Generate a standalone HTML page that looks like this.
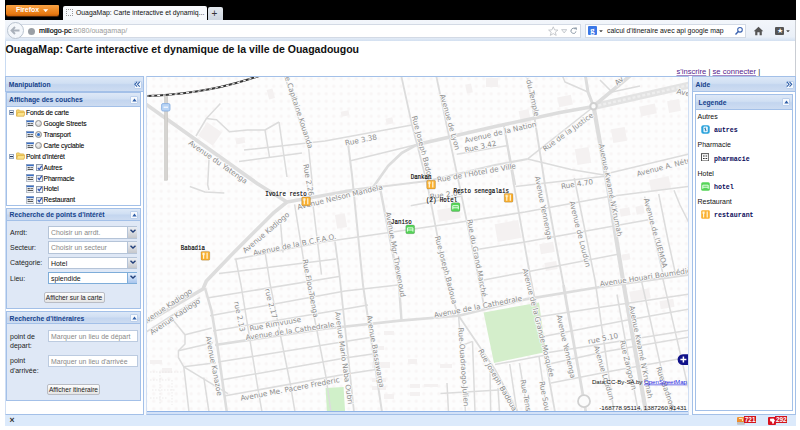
<!DOCTYPE html>
<html><head><meta charset="utf-8"><title>OuagaMap</title>
<style>
html,body{margin:0;padding:0;background:#fff;}
body{width:800px;height:430px;position:relative;overflow:hidden;font-family:"Liberation Sans",sans-serif;}
.a{position:absolute;}
.t{position:absolute;white-space:nowrap;line-height:1;}
.ph{position:absolute;background:linear-gradient(#dde8f7,#d0dff3 45%,#c3d5ef 55%,#cddcf1);border:1px solid #a3c0e8;box-sizing:border-box;}
.pt{position:absolute;white-space:nowrap;line-height:1;font-weight:bold;color:#15428b;font-size:6.78px;}
.tool{position:absolute;box-sizing:border-box;border:1px solid #bcd0ec;background:#f6f9fd;border-radius:1px;}
.tr{position:absolute;white-space:nowrap;line-height:1;font-size:6.7px;letter-spacing:-0.13px;color:#000;-webkit-text-stroke:0.1px #222;}
.fld{position:absolute;box-sizing:border-box;border:1px solid #bccbe0;background:#fff;}
.trig{position:absolute;box-sizing:border-box;border:1px solid #b5c4d8;border-left:none;border-right:none;background:linear-gradient(#eceff4,#c6c8cc);}
.lbl{position:absolute;white-space:nowrap;line-height:1;font-size:7px;color:#222;}
.ftx{position:absolute;white-space:nowrap;line-height:1;font-size:6.95px;}
.btn{position:absolute;box-sizing:border-box;border:1px solid #b9bcc4;border-radius:2px;background:linear-gradient(#fdfdfd,#e4e4e4);font-size:6.55px;color:#222;text-align:center;white-space:nowrap;}
</style></head><body>
<!-- browser chrome -->
<div class="a" id="blk" style="left:5px;top:0;width:791px;height:20px;background:#000"></div>
<div class="a" id="ffb" style="left:5.5px;top:5px;width:53.5px;height:10.6px;background:linear-gradient(#f8a244,#e97a12 80%,#c9620c);border-radius:1px 1px 2px 2px;box-shadow:0 1px 0 #4a2408;"></div>
<div class="t" style="left:16px;top:7px;font-size:6.9px;font-weight:bold;color:#fff;">Firefox</div>
<svg class="a" style="left:43.4px;top:8.6px" width="5.4" height="3.4" viewBox="0 0 5.4 3.4"><path d="M0.2 0.3 H5.2 L2.7 3.2 Z" fill="#fff"/></svg>
<div class="a" id="tab" style="left:63px;top:6px;width:144px;height:14px;background:#f7f9fc;border-radius:2px 2px 0 0;"></div>
<div class="a" style="left:66px;top:9px;width:7px;height:7px;box-sizing:border-box;border:1px dotted #999;"></div>
<div class="t" style="left:76px;top:9.6px;font-size:6.83px;color:#111;">OuagaMap: Carte interactive et dynamiq...</div>
<div class="a" id="ntb" style="left:208px;top:7px;width:15px;height:13px;background:linear-gradient(#e3e8ee,#cdd5df);border-radius:2px 2px 0 0;"></div>
<div class="t" style="left:211.5px;top:8.5px;font-size:10px;color:#333;">+</div>
<div class="a" id="nav" style="left:5px;top:20px;width:791px;height:21px;background:linear-gradient(#f3f6fb,#eaf0f8 80%,#d3e0f1);"></div>
<div class="a" id="url" style="left:14px;top:24px;width:567px;height:14px;box-sizing:border-box;border:1px solid #d3dae5;background:#fff;"></div>
<div class="a" id="back" style="left:7px;top:22px;width:17px;height:17px;box-sizing:border-box;border:1px solid #b9c3d0;border-radius:50%;background:#f4f7fb;"></div>
<svg class="a" style="left:10px;top:26px" width="11" height="9" viewBox="0 0 11 9"><path d="M5 1 L1.5 4.5 L5 8 M1.5 4.5 H9.5" fill="none" stroke="#aab1bb" stroke-width="1.8"/></svg>
<div class="a" style="left:28px;top:28px;width:7px;height:7px;border-radius:50%;background:#9a9fa5;"></div>
<div class="t" style="left:39px;top:27.6px;font-size:7.15px;color:#000;-webkit-text-stroke:0.15px #000;">millogo-pc<span style="color:#999;-webkit-text-stroke:0">:8080/ouagamap/</span></div>
<svg class="a" style="left:547.5px;top:25.5px" width="10.5" height="10" viewBox="0 0 10.5 10"><path d="M5.25 0.8 L6.6 3.9 L9.9 4.1 L7.3 6.2 L8.2 9.4 L5.25 7.6 L2.3 9.4 L3.2 6.2 L0.6 4.1 L3.9 3.9 Z" fill="#fff" stroke="#b9bdc2" stroke-width="0.8" stroke-linejoin="round"/></svg>
<svg class="a" style="left:561px;top:29px" width="6.4" height="4.6" viewBox="0 0 6.4 4.6"><path d="M0.6 0.6 H5.8 L3.2 4 Z" fill="#f4f6f8" stroke="#b4b9bf" stroke-width="0.7" stroke-linejoin="round"/></svg>
<svg class="a" style="left:570.4px;top:27.4px" width="7.4" height="7.4" viewBox="0 0 7.4 7.4"><path d="M5.9 4.4 A2.5 2.5 0 1 1 5.2 2" fill="none" stroke="#8795a3" stroke-width="1"/><path d="M4 0.4 H6.8 V3.2 Z" fill="#8795a3"/></svg>
<div class="a" id="srch" style="left:585px;top:24px;width:161px;height:14px;box-sizing:border-box;border:1px solid #d3dae5;background:#fff;"></div>
<div class="a" style="left:588px;top:26px;width:9px;height:9px;background:#3b78e7;border-radius:1px;"></div>
<div class="t" style="left:590.2px;top:25.6px;font-size:8.6px;font-weight:bold;color:#fff;font-family:'Liberation Serif',serif;">g</div>
<svg class="a" style="left:598.6px;top:29.6px" width="4" height="2.6" viewBox="0 0 4 2.6"><path d="M0.2 0.3 H3.8 L2 2.4 Z" fill="#444"/></svg>
<div class="t" style="left:607px;top:27.7px;font-size:6.9px;color:#111;">calcul d'itineraire avec api google map</div>
<svg class="a" style="left:734px;top:26px" width="10" height="10" viewBox="0 0 10 10"><circle cx="6" cy="3.8" r="2.3" fill="none" stroke="#3a62b0" stroke-width="1.1"/><path d="M4.3 5.6 L1.5 8.5" stroke="#3a62b0" stroke-width="1.4"/></svg>
<svg class="a" style="left:753px;top:26px" width="11" height="10" viewBox="0 0 11 10"><path d="M5.5 0.8 L10.3 5.2 H8.8 V9.2 H6.6 V6.3 H4.4 V9.2 H2.2 V5.2 H0.7 Z" fill="#555"/></svg>
<div class="a" style="left:775px;top:27px;width:9px;height:8px;background:#555;border-radius:1px;"></div>
<div class="t" style="left:776.5px;top:27px;font-size:7px;color:#fff;">★</div>
<svg class="a" style="left:785.6px;top:29.8px" width="4" height="2.6" viewBox="0 0 4 2.6"><path d="M0.2 0.3 H3.8 L2 2.4 Z" fill="#444"/></svg>
<div class="a" style="left:795px;top:20px;width:1px;height:406px;background:#c9cdd3;"></div>

<div class="a" id="lb" style="left:5px;top:41px;width:1px;height:385px;background:#c9dbf2;"></div>
<!-- page header -->
<div class="t" id="title" style="left:5.6px;top:44px;font-size:10.54px;font-weight:bold;color:#111;">OuagaMap: Carte interactive et dynamique de la ville de Ouagadougou</div>
<div class="t" id="links" style="left:676.5px;top:67.8px;font-size:7.62px;color:#222;"><span style="color:#551a8b;text-decoration:underline;text-decoration-color:#a98cc6;text-decoration-thickness:0.7px">s'inscrire</span> | <span style="color:#551a8b;text-decoration:underline;text-decoration-color:#a98cc6;text-decoration-thickness:0.7px">se connecter</span> |</div>

<!-- viewport bg -->
<div class="a" id="vp" style="left:5px;top:76px;width:791px;height:339px;background:#f7fafe;"></div>

<!-- LEFT PANEL -->
<div class="a" style="left:5px;top:76px;width:139px;height:339px;box-sizing:border-box;border:1px solid #a3c0e8;border-left-color:#cfdef3;background:#fff;"></div>
<div class="ph" style="left:5px;top:76px;width:139px;height:16px;"></div>
<div class="pt" style="left:8.8px;top:81.8px;">Manipulation</div>
<div class="tool" style="left:133.5px;top:80.5px;width:8px;height:8px;"></div>
<svg class="a" style="left:134.2px;top:81.2px" width="6.6" height="6.6" viewBox="0 0 6 6"><path d="M2.8 0.9 L0.8 3 L2.8 5.1 M5.2 0.9 L3.2 3 L5.2 5.1" fill="none" stroke="#2f5fa8" stroke-width="1"/></svg>

<!-- panel 1 -->
<div class="a" style="left:6px;top:92px;width:135px;height:114px;box-sizing:border-box;border:1px solid #a3c0e8;background:#fff;"></div>
<div class="ph" style="left:6px;top:92px;width:135px;height:15px;"></div>
<div class="pt" style="left:9px;top:97.2px;">Affichage des couches</div>
<div class="tool" style="left:130px;top:96px;width:8px;height:8px;"></div>
<svg class="a" style="left:131.5px;top:98.2px" width="5" height="4" viewBox="0 0 5 4"><path d="M0.3 3.4 L2.5 0.6 L4.7 3.4 Z" fill="#2f5ea8"/></svg>
<div id="tree">
<div class="a" style="left:9px;top:110.0px;width:5.4px;height:5.4px;box-sizing:border-box;border:1px solid #93a6c2;background:linear-gradient(#fff,#c9d6ea);"></div>
<div class="a" style="left:10.4px;top:112.3px;width:2.6px;height:0.9px;background:#2b3a55;"></div>
<svg class="a" style="left:15.8px;top:108.6px" width="9.4" height="8" viewBox="0 0 9.4 8"><path d="M0.5 6.9 V1.5 Q0.5 0.9 1.1 0.9 H3.3 L4.1 1.9 H7.4 Q8 1.9 8 2.5 V3.2" fill="#f6d873" stroke="#d8a838" stroke-width="0.7"/><path d="M0.6 7.2 L1.6 3.4 H9 L8 7.2 Z" fill="#fbe38c" stroke="#d8a838" stroke-width="0.7" stroke-linejoin="round"/></svg>
<div class="tr" style="left:26px;top:110.1px;">Fonds de carte</div>
<svg class="a" style="left:25.6px;top:119.9px" width="8.4" height="7.6" viewBox="0 0 8.4 7.6"><rect x="0.3" y="0.3" width="7.8" height="7" fill="#eef1f5" stroke="#8b97a8" stroke-width="0.6"/><rect x="0.6" y="0.6" width="7.2" height="1.5" fill="#3b6fc4"/><rect x="1.6" y="3.2" width="2.2" height="1" fill="#333"/><rect x="4.4" y="3.2" width="2.6" height="0.9" fill="#555"/><rect x="1.6" y="5" width="5.4" height="0.9" fill="#444"/></svg>
<div class="a" style="left:35.2px;top:120.2px;width:7px;height:7px;box-sizing:border-box;border:1px solid #8e8e8e;border-radius:50%;background:radial-gradient(circle at 40% 35%,#f6f6f6,#c2c2c2);"></div>
<div class="tr" style="left:43.6px;top:121.0px;">Google Streets</div>
<svg class="a" style="left:25.6px;top:130.8px" width="8.4" height="7.6" viewBox="0 0 8.4 7.6"><rect x="0.3" y="0.3" width="7.8" height="7" fill="#eef1f5" stroke="#8b97a8" stroke-width="0.6"/><rect x="0.6" y="0.6" width="7.2" height="1.5" fill="#3b6fc4"/><rect x="1.6" y="3.2" width="2.2" height="1" fill="#333"/><rect x="4.4" y="3.2" width="2.6" height="0.9" fill="#555"/><rect x="1.6" y="5" width="5.4" height="0.9" fill="#444"/></svg>
<div class="a" style="left:35.2px;top:131.1px;width:7px;height:7px;box-sizing:border-box;border:1px solid #8e8e8e;border-radius:50%;background:radial-gradient(circle at 40% 35%,#f6f6f6,#c2c2c2);"></div>
<div class="a" style="left:37.2px;top:133.1px;width:3px;height:3px;border-radius:50%;background:#2b6cc8;"></div>
<div class="tr" style="left:43.6px;top:131.9px;">Transport</div>
<svg class="a" style="left:25.6px;top:141.7px" width="8.4" height="7.6" viewBox="0 0 8.4 7.6"><rect x="0.3" y="0.3" width="7.8" height="7" fill="#eef1f5" stroke="#8b97a8" stroke-width="0.6"/><rect x="0.6" y="0.6" width="7.2" height="1.5" fill="#3b6fc4"/><rect x="1.6" y="3.2" width="2.2" height="1" fill="#333"/><rect x="4.4" y="3.2" width="2.6" height="0.9" fill="#555"/><rect x="1.6" y="5" width="5.4" height="0.9" fill="#444"/></svg>
<div class="a" style="left:35.2px;top:142.0px;width:7px;height:7px;box-sizing:border-box;border:1px solid #8e8e8e;border-radius:50%;background:radial-gradient(circle at 40% 35%,#f6f6f6,#c2c2c2);"></div>
<div class="tr" style="left:43.6px;top:142.8px;">Carte cyclable</div>
<div class="a" style="left:9px;top:153.6px;width:5.4px;height:5.4px;box-sizing:border-box;border:1px solid #93a6c2;background:linear-gradient(#fff,#c9d6ea);"></div>
<div class="a" style="left:10.4px;top:155.9px;width:2.6px;height:0.9px;background:#2b3a55;"></div>
<svg class="a" style="left:15.8px;top:152.2px" width="9.4" height="8" viewBox="0 0 9.4 8"><path d="M0.5 6.9 V1.5 Q0.5 0.9 1.1 0.9 H3.3 L4.1 1.9 H7.4 Q8 1.9 8 2.5 V3.2" fill="#f6d873" stroke="#d8a838" stroke-width="0.7"/><path d="M0.6 7.2 L1.6 3.4 H9 L8 7.2 Z" fill="#fbe38c" stroke="#d8a838" stroke-width="0.7" stroke-linejoin="round"/></svg>
<div class="tr" style="left:26px;top:153.7px;">Point d'intérêt</div>
<svg class="a" style="left:25.6px;top:163.5px" width="8.4" height="7.6" viewBox="0 0 8.4 7.6"><rect x="0.3" y="0.3" width="7.8" height="7" fill="#eef1f5" stroke="#8b97a8" stroke-width="0.6"/><rect x="0.6" y="0.6" width="7.2" height="1.5" fill="#3b6fc4"/><rect x="1.6" y="3.2" width="2.2" height="1" fill="#333"/><rect x="4.4" y="3.2" width="2.6" height="0.9" fill="#555"/><rect x="1.6" y="5" width="5.4" height="0.9" fill="#444"/></svg>
<div class="a" style="left:35.6px;top:163.8px;width:7.2px;height:7px;box-sizing:border-box;border:1px solid #8e9aab;background:linear-gradient(135deg,#dfe6ee,#fbfcfd);"></div>
<svg class="a" style="left:36.5px;top:164.5px" width="5.6" height="5.6" viewBox="0 0 5 5"><path d="M0.8 2.5 L2 4.1 L4.3 0.7" fill="none" stroke="#3558b8" stroke-width="1.15"/></svg>
<div class="tr" style="left:43.6px;top:164.6px;">Autres</div>
<svg class="a" style="left:25.6px;top:174.4px" width="8.4" height="7.6" viewBox="0 0 8.4 7.6"><rect x="0.3" y="0.3" width="7.8" height="7" fill="#eef1f5" stroke="#8b97a8" stroke-width="0.6"/><rect x="0.6" y="0.6" width="7.2" height="1.5" fill="#3b6fc4"/><rect x="1.6" y="3.2" width="2.2" height="1" fill="#333"/><rect x="4.4" y="3.2" width="2.6" height="0.9" fill="#555"/><rect x="1.6" y="5" width="5.4" height="0.9" fill="#444"/></svg>
<div class="a" style="left:35.6px;top:174.7px;width:7.2px;height:7px;box-sizing:border-box;border:1px solid #8e9aab;background:linear-gradient(135deg,#dfe6ee,#fbfcfd);"></div>
<svg class="a" style="left:36.5px;top:175.4px" width="5.6" height="5.6" viewBox="0 0 5 5"><path d="M0.8 2.5 L2 4.1 L4.3 0.7" fill="none" stroke="#3558b8" stroke-width="1.15"/></svg>
<div class="tr" style="left:43.6px;top:175.5px;">Pharmacie</div>
<svg class="a" style="left:25.6px;top:185.3px" width="8.4" height="7.6" viewBox="0 0 8.4 7.6"><rect x="0.3" y="0.3" width="7.8" height="7" fill="#eef1f5" stroke="#8b97a8" stroke-width="0.6"/><rect x="0.6" y="0.6" width="7.2" height="1.5" fill="#3b6fc4"/><rect x="1.6" y="3.2" width="2.2" height="1" fill="#333"/><rect x="4.4" y="3.2" width="2.6" height="0.9" fill="#555"/><rect x="1.6" y="5" width="5.4" height="0.9" fill="#444"/></svg>
<div class="a" style="left:35.6px;top:185.6px;width:7.2px;height:7px;box-sizing:border-box;border:1px solid #8e9aab;background:linear-gradient(135deg,#dfe6ee,#fbfcfd);"></div>
<svg class="a" style="left:36.5px;top:186.3px" width="5.6" height="5.6" viewBox="0 0 5 5"><path d="M0.8 2.5 L2 4.1 L4.3 0.7" fill="none" stroke="#3558b8" stroke-width="1.15"/></svg>
<div class="tr" style="left:43.6px;top:186.4px;">Hotel</div>
<svg class="a" style="left:25.6px;top:196.2px" width="8.4" height="7.6" viewBox="0 0 8.4 7.6"><rect x="0.3" y="0.3" width="7.8" height="7" fill="#eef1f5" stroke="#8b97a8" stroke-width="0.6"/><rect x="0.6" y="0.6" width="7.2" height="1.5" fill="#3b6fc4"/><rect x="1.6" y="3.2" width="2.2" height="1" fill="#333"/><rect x="4.4" y="3.2" width="2.6" height="0.9" fill="#555"/><rect x="1.6" y="5" width="5.4" height="0.9" fill="#444"/></svg>
<div class="a" style="left:35.6px;top:196.5px;width:7.2px;height:7px;box-sizing:border-box;border:1px solid #8e9aab;background:linear-gradient(135deg,#dfe6ee,#fbfcfd);"></div>
<svg class="a" style="left:36.5px;top:197.2px" width="5.6" height="5.6" viewBox="0 0 5 5"><path d="M0.8 2.5 L2 4.1 L4.3 0.7" fill="none" stroke="#3558b8" stroke-width="1.15"/></svg>
<div class="tr" style="left:43.6px;top:197.3px;">Restaurant</div>
</div><!--/tree-->

<!-- panel 2 -->
<div class="a" style="left:6px;top:208px;width:135px;height:101px;box-sizing:border-box;border:1px solid #a3c0e8;background:#dfe8f6;"></div>
<div class="ph" style="left:6px;top:208px;width:135px;height:13px;"></div>
<div class="pt" style="left:9.6px;top:211.8px;">Recherche de points d'intérêt</div>
<div class="tool" style="left:130px;top:211px;width:8px;height:8px;"></div>
<svg class="a" style="left:131.5px;top:213.2px" width="5" height="4" viewBox="0 0 5 4"><path d="M0.3 3.4 L2.5 0.6 L4.7 3.4 Z" fill="#2f5ea8"/></svg>
<div id="form1">
<div class="lbl" style="left:10px;top:228.6px;">Arrdt:</div>
<div class="fld" style="left:47.5px;top:226.0px;width:80px;height:12.6px;border-color:#b5c4d8;"></div>
<div class="trig" style="left:127.5px;top:226.0px;width:9.6px;height:12.6px;border-color:#b5c4d8;"></div>
<svg class="a" style="left:129.6px;top:229.4px" width="6" height="4" viewBox="0 0 6 4"><path d="M0.5 0.7 L3 3 L5.5 0.7" fill="none" stroke="#223f7a" stroke-width="1.4"/></svg>
<div class="ftx" style="left:51px;top:230.1px;color:#888;">Choisir un arrdt.</div>
<div class="lbl" style="left:10px;top:243.9px;">Secteur:</div>
<div class="fld" style="left:47.5px;top:241.3px;width:80px;height:12.6px;border-color:#b5c4d8;"></div>
<div class="trig" style="left:127.5px;top:241.3px;width:9.6px;height:12.6px;border-color:#b5c4d8;"></div>
<svg class="a" style="left:129.6px;top:244.7px" width="6" height="4" viewBox="0 0 6 4"><path d="M0.5 0.7 L3 3 L5.5 0.7" fill="none" stroke="#223f7a" stroke-width="1.4"/></svg>
<div class="ftx" style="left:51px;top:245.4px;color:#888;">Choisir un secteur</div>
<div class="lbl" style="left:10px;top:259.2px;">Catégorie:</div>
<div class="fld" style="left:47.5px;top:256.6px;width:80px;height:12.6px;border-color:#b5c4d8;"></div>
<div class="trig" style="left:127.5px;top:256.6px;width:9.6px;height:12.6px;border-color:#b5c4d8;"></div>
<svg class="a" style="left:129.6px;top:260.0px" width="6" height="4" viewBox="0 0 6 4"><path d="M0.5 0.7 L3 3 L5.5 0.7" fill="none" stroke="#223f7a" stroke-width="1.4"/></svg>
<div class="ftx" style="left:51px;top:260.7px;color:#111;">Hotel</div>
<div class="lbl" style="left:10px;top:274.5px;">Lieu:</div>
<div class="fld" style="left:47.5px;top:271.9px;width:80px;height:12.6px;border-color:#7eadd9;"></div>
<div class="trig" style="left:127.5px;top:271.9px;width:9.6px;height:12.6px;border-color:#7eadd9;background:linear-gradient(#e4eefb,#a9c6ee);"></div>
<svg class="a" style="left:129.6px;top:275.3px" width="6" height="4" viewBox="0 0 6 4"><path d="M0.5 0.7 L3 3 L5.5 0.7" fill="none" stroke="#223f7a" stroke-width="1.4"/></svg>
<div class="ftx" style="left:51px;top:276.0px;color:#111;">splendide</div>
</div><!--/form1-->
<div class="btn" style="left:43.5px;top:292px;width:61px;height:11px;line-height:9.5px;">Afficher sur la carte</div>

<!-- panel 3 -->
<div class="a" style="left:6px;top:311px;width:135px;height:90px;box-sizing:border-box;border:1px solid #a3c0e8;background:#dfe8f6;"></div>
<div class="ph" style="left:6px;top:311px;width:135px;height:13px;"></div>
<div class="pt" style="left:9.6px;top:316.2px;">Recherche d'itinéraires</div>
<div class="tool" style="left:130px;top:314px;width:8px;height:8px;"></div>
<svg class="a" style="left:131.5px;top:316.2px" width="5" height="4" viewBox="0 0 5 4"><path d="M0.3 3.4 L2.5 0.6 L4.7 3.4 Z" fill="#2f5ea8"/></svg>
<div class="lbl" style="left:10px;top:333px;">point de</div>
<div class="lbl" style="left:10px;top:342px;">depart:</div>
<div class="fld" style="left:47.5px;top:330px;width:90px;height:12px;"></div>
<div class="ftx" style="left:51px;top:333.6px;color:#888;">Marquer un lieu de départ</div>
<div class="lbl" style="left:10px;top:357px;">point</div>
<div class="lbl" style="left:10px;top:366.5px;">d'arrivée:</div>
<div class="fld" style="left:47.5px;top:355px;width:90px;height:12px;"></div>
<div class="ftx" style="left:51px;top:358.6px;color:#888;">Marquer un lieu d'arrivée</div>
<div class="btn" style="left:47px;top:384px;width:53px;height:11px;line-height:9.5px;">Afficher itinéraire</div>

<!-- MAP -->
<div class="a" id="mapwrap" style="left:146px;top:76px;width:542.8px;height:339px;box-sizing:border-box;border:1px solid #a3c0e8;border-left-color:#cfdef3;border-right-color:#cfdef3;background:#f9f9f8;overflow:hidden;"></div>

<!--MAPSTART-->
<svg class="a" id="map" style="left:147px;top:77px" width="540.8" height="334" viewBox="147 77 540.8 334">
<defs><pattern id="dots" x="0" y="0" width="7.5" height="7.5" patternUnits="userSpaceOnUse"><rect width="7.5" height="7.5" fill="#fdfdfd"/><circle cx="3.7" cy="3.7" r="1.6" fill="#f8f5f5"/></pattern></defs>
<rect x="140" y="70" width="560" height="350" fill="url(#dots)"/>
<path d="M483.6 312.5 L539 302.5 L546 352 L494 363 Z" fill="#d4eecb"/>
<path d="M325.6 388 L343.6 387 L345.2 413 L327 413 Z" fill="#d0f0c9"/>
<rect x="201" y="126" width="18" height="16" fill="#f4f1f1" transform="rotate(35 210.0 134.0)"/>
<rect x="267.8" y="89" width="6" height="10" fill="#f4f1f1" transform="rotate(-15 270.8 94.0)"/>
<rect x="235.8" y="137.7" width="9" height="6" fill="#f4f1f1" transform="rotate(-10 240.3 140.7)"/>
<rect x="341" y="111" width="8" height="5" fill="#f4f1f1" transform="rotate(-10 345.0 113.5)"/>
<rect x="386" y="118" width="7" height="6" fill="#f4f1f1" transform="rotate(-12 389.5 121.0)"/>
<rect x="466" y="84" width="6" height="9" fill="#f4f1f1" transform="rotate(-12 469.0 88.5)"/>
<rect x="486" y="78" width="12" height="9" fill="#f4f1f1" transform="rotate(0 492.0 82.5)"/>
<rect x="558" y="96" width="14" height="10" fill="#f4f1f1" transform="rotate(-12 565.0 101.0)"/>
<rect x="520" y="110" width="10" height="14" fill="#f4f1f1" transform="rotate(-12 525.0 117.0)"/>
<rect x="576" y="148" width="14" height="16" fill="#f4f1f1" transform="rotate(-10 583.0 156.0)"/>
<rect x="612" y="128" width="14" height="14" fill="#f4f1f1" transform="rotate(-10 619.0 135.0)"/>
<rect x="640" y="105" width="16" height="10" fill="#f4f1f1" transform="rotate(-12 648.0 110.0)"/>
<rect x="668" y="100" width="12" height="12" fill="#f4f1f1" transform="rotate(-10 674.0 106.0)"/>
<rect x="650" y="178" width="20" height="12" fill="#f4f1f1" transform="rotate(-12 660.0 184.0)"/>
<rect x="438" y="208" width="22" height="12" fill="#f4f1f1" transform="rotate(-10 449.0 214.0)"/>
<rect x="496" y="222" width="24" height="18" fill="#f4f1f1" transform="rotate(-10 508.0 231.0)"/>
<rect x="336" y="214" width="10" height="14" fill="#f4f1f1" transform="rotate(-10 341.0 221.0)"/>
<rect x="540" y="243" width="14" height="10" fill="#f4f1f1" transform="rotate(-10 547.0 248.0)"/>
<rect x="620" y="208" width="10" height="8" fill="#f4f1f1" transform="rotate(-10 625.0 212.0)"/>
<rect x="636" y="206" width="8" height="8" fill="#f4f1f1" transform="rotate(-10 640.0 210.0)"/>
<rect x="622" y="254" width="8" height="6" fill="#f4f1f1" transform="rotate(-10 626.0 257.0)"/>
<rect x="384" y="331" width="10" height="4" fill="#f4f1f1" transform="rotate(0 389.0 333.0)"/>
<rect x="372" y="346" width="12" height="4" fill="#f4f1f1" transform="rotate(0 378.0 348.0)"/>
<rect x="372" y="362" width="18" height="6" fill="#f4f1f1" transform="rotate(0 381.0 365.0)"/>
<rect x="408" y="359" width="9" height="5" fill="#f4f1f1" transform="rotate(0 412.5 361.5)"/>
<rect x="440" y="364" width="12" height="4" fill="#f4f1f1" transform="rotate(0 446.0 366.0)"/>
<rect x="372" y="378" width="14" height="4" fill="#f4f1f1" transform="rotate(0 379.0 380.0)"/>
<rect x="372" y="386" width="14" height="4" fill="#f4f1f1" transform="rotate(0 379.0 388.0)"/>
<rect x="410" y="384" width="10" height="4" fill="#f4f1f1" transform="rotate(0 415.0 386.0)"/>
<rect x="424" y="384" width="14" height="3" fill="#f4f1f1" transform="rotate(0 431.0 385.5)"/>
<rect x="410" y="392" width="10" height="4" fill="#f4f1f1" transform="rotate(0 415.0 394.0)"/>
<rect x="384" y="394" width="10" height="5" fill="#f4f1f1" transform="rotate(0 389.0 396.5)"/>
<rect x="630" y="290" width="20" height="10" fill="#f4f1f1" transform="rotate(-10 640.0 295.0)"/>
<rect x="660" y="300" width="14" height="8" fill="#f4f1f1" transform="rotate(-10 667.0 304.0)"/>
<rect x="545" y="262" width="12" height="8" fill="#f4f1f1" transform="rotate(-10 551.0 266.0)"/>
<rect x="162" y="368" width="10" height="5" fill="#f4f1f1" transform="rotate(0 167.0 370.5)"/>
<rect x="150" y="360" width="12" height="4" fill="#f4f1f1" transform="rotate(0 156.0 362.0)"/>
<path d="M150 372 H182 M150 380 H170 M152 390 H176 M150 398 H168 M160 372 V405 M172 380 V405" fill="none" stroke="#e9e6e6" stroke-width="0.8" stroke-dasharray="1.5 1.5"/>
<path d="M140.0 100.0 L147.0 105.0 L257.5 183.7 L287.0 202.0" fill="none" stroke="#dddddd" stroke-width="3.7" stroke-linejoin="round"/>
<path d="M287.0 202.0 L345.0 191.6 L382.5 186.5" fill="none" stroke="#dddddd" stroke-width="3.5" stroke-linejoin="round"/>
<path d="M382.5 186.5 L427.3 181.0 L495.0 165.0 L527.7 159.0" fill="none" stroke="#dddddd" stroke-width="2" stroke-linejoin="round"/>
<path d="M287.0 202.0 L272.9 213.4 L234.5 251.7 L206.4 281.0 L203.0 289.0 L140.0 326.0" fill="none" stroke="#dddddd" stroke-width="3.6" stroke-linejoin="round"/>
<path d="M200.0 297.5 L140.0 336.0" fill="none" stroke="#dcdcdc" stroke-width="1.6" stroke-linejoin="round"/>
<path d="M417.0 144.6 L440.0 139.2 L495.0 126.6 L560.0 112.4 L593.5 106.4" fill="none" stroke="#dddddd" stroke-width="3.6" stroke-linejoin="round"/>
<path d="M593.5 106.6 L700.0 82.6" fill="none" stroke="#e3e3e3" stroke-width="7" stroke-linejoin="round"/>
<path d="M417.0 144.6 L401.7 153.0 L388.0 166.0 L376.8 182.0 L371.0 190.0" fill="none" stroke="#dddddd" stroke-width="2.6" stroke-linejoin="round"/>
<path d="M593.5 106.2 L607.5 185.0 L623.8 285.0 L646.0 412.0 L648.0 425.0" fill="none" stroke="#dddddd" stroke-width="4.2" stroke-linejoin="round"/>
<path d="M215.0 345.0 L325.0 328.7 L400.0 320.6 L458.6 315.7 L525.0 299.4 L600.0 287.0 L700.0 273.0" fill="none" stroke="#dddddd" stroke-width="2.6" stroke-linejoin="round"/>
<path d="M348.0 143.5 L352.0 175.0 L363.0 285.0 L382.0 412.0 L384.0 425.0" fill="none" stroke="#dddddd" stroke-width="2" stroke-linejoin="round"/>
<path d="M380.0 187.8 L399.0 285.0 L401.5 320.6" fill="none" stroke="#dddddd" stroke-width="2.4" stroke-linejoin="round"/>
<path d="M526.0 70.0 L534.6 118.5 L545.0 185.0 L563.5 285.0" fill="none" stroke="#dcdcdc" stroke-width="1.9" stroke-linejoin="round"/>
<path d="M563.5 285.0 L566.0 300.0 L584.0 401.0 L588.0 425.0" fill="none" stroke="#dddddd" stroke-width="2.8" stroke-linejoin="round"/>
<path d="M574.3 178.0 L595.0 280.0 L614.0 412.0 L616.0 425.0" fill="none" stroke="#dcdcdc" stroke-width="1.6" stroke-linejoin="round"/>
<path d="M400.0 70.0 L412.0 125.0 L417.0 144.0 L427.0 182.7 L446.0 280.0 L458.6 315.7 L495.0 369.5 L517.8 412.0 L524.0 425.0" fill="none" stroke="#dcdcdc" stroke-width="1.8" stroke-linejoin="round"/>
<path d="M435.0 70.0 L459.3 185.0 L480.0 285.0 L484.6 309.2" fill="none" stroke="#dcdcdc" stroke-width="1.8" stroke-linejoin="round"/>
<path d="M504.0 126.0 L513.0 180.0 L530.0 275.0 L535.0 300.0 L555.0 412.0 L557.0 425.0" fill="none" stroke="#dcdcdc" stroke-width="1.8" stroke-linejoin="round"/>
<path d="M205.0 288.0 L211.5 310.8 L217.0 343.4 L226.8 412.0 L229.0 425.0" fill="none" stroke="#dddddd" stroke-width="2.6" stroke-linejoin="round"/>
<path d="M593.5 106.2 L588.0 92.0 L584.5 70.0" fill="none" stroke="#dddddd" stroke-width="3" stroke-linejoin="round"/>
<path d="M593.5 106.2 L628.0 77.5 L640.0 68.0" fill="none" stroke="#dddddd" stroke-width="3.6" stroke-linejoin="round"/>
<path d="M244.0 150.0 L325.0 141.0 L412.0 125.0" fill="none" stroke="#dcdcdc" stroke-width="1.5" stroke-linejoin="round"/>
<path d="M239.0 161.4 L302.0 153.0" fill="none" stroke="#dcdcdc" stroke-width="1.5" stroke-linejoin="round"/>
<path d="M350.6 160.7 L417.0 144.6" fill="none" stroke="#dcdcdc" stroke-width="1.5" stroke-linejoin="round"/>
<path d="M283.0 70.0 L285.0 77.0 L308.7 149.0 L312.5 185.0 L311.0 199.0" fill="none" stroke="#dcdcdc" stroke-width="1.5" stroke-linejoin="round"/>
<path d="M279.0 122.0 L287.0 177.0" fill="none" stroke="#dcdcdc" stroke-width="1.5" stroke-linejoin="round"/>
<path d="M196.0 136.0 L206.4 118.5 L220.4 103.6" fill="none" stroke="#dcdcdc" stroke-width="1.5" stroke-linejoin="round"/>
<path d="M206.4 118.5 L216.6 119.8 L229.4 131.8 L247.3 130.0 L265.0 130.0 L279.0 122.0" fill="none" stroke="#dcdcdc" stroke-width="1.5" stroke-linejoin="round"/>
<path d="M265.0 130.0 L269.5 157.0" fill="none" stroke="#dcdcdc" stroke-width="1.5" stroke-linejoin="round"/>
<path d="M209.0 159.4 L207.7 185.0 L209.0 190.0" fill="none" stroke="#dcdcdc" stroke-width="1.5" stroke-linejoin="round"/>
<path d="M189.8 186.5 L205.0 192.0 L224.3 193.0" fill="none" stroke="#dcdcdc" stroke-width="1.5" stroke-linejoin="round"/>
<path d="M456.7 154.3 L508.0 145.4" fill="none" stroke="#dcdcdc" stroke-width="1.5" stroke-linejoin="round"/>
<path d="M527.7 158.9 L592.0 108.0" fill="none" stroke="#dcdcdc" stroke-width="1.5" stroke-linejoin="round"/>
<path d="M527.7 159.0 L571.0 169.5 L602.4 174.7 L688.0 154.3 L700.0 151.5" fill="none" stroke="#dcdcdc" stroke-width="1.5" stroke-linejoin="round"/>
<path d="M515.5 186.5 L605.0 176.3" fill="none" stroke="#dcdcdc" stroke-width="1.5" stroke-linejoin="round"/>
<path d="M234.5 259.4 L325.0 241.8 L450.0 223.8 L525.0 212.0 L607.5 196.7 L688.0 186.5 L700.0 185.0" fill="none" stroke="#dcdcdc" stroke-width="1.6" stroke-linejoin="round"/>
<path d="M219.0 273.5 L336.0 259.0" fill="none" stroke="#dcdcdc" stroke-width="1.5" stroke-linejoin="round"/>
<path d="M294.6 204.4 L306.0 275.0 L325.8 376.0 L331.0 412.0" fill="none" stroke="#dcdcdc" stroke-width="1.5" stroke-linejoin="round"/>
<path d="M312.5 200.6 L321.5 274.7" fill="none" stroke="#dcdcdc" stroke-width="1.5" stroke-linejoin="round"/>
<path d="M235.8 259.4 L241.0 285.0 L257.4 385.7 L262.0 412.0" fill="none" stroke="#dcdcdc" stroke-width="1.5" stroke-linejoin="round"/>
<path d="M265.0 251.7 L270.3 285.0 L290.0 382.5 L295.0 412.0" fill="none" stroke="#dcdcdc" stroke-width="1.5" stroke-linejoin="round"/>
<path d="M335.0 241.5 L339.5 275.0 L354.0 412.0 L355.5 425.0" fill="none" stroke="#dcdcdc" stroke-width="1.8" stroke-linejoin="round"/>
<path d="M208.5 297.8 L339.0 276.5" fill="none" stroke="#dcdcdc" stroke-width="1.5" stroke-linejoin="round"/>
<path d="M210.0 315.7 L345.0 291.0 L398.0 285.0" fill="none" stroke="#dcdcdc" stroke-width="1.5" stroke-linejoin="round"/>
<path d="M213.0 331.0 L345.0 309.0 L368.0 305.0" fill="none" stroke="#dcdcdc" stroke-width="1.5" stroke-linejoin="round"/>
<path d="M218.0 362.0 L345.0 341.6 L373.0 337.0" fill="none" stroke="#dcdcdc" stroke-width="1.5" stroke-linejoin="round"/>
<path d="M221.0 380.0 L345.0 358.0 L376.0 353.5" fill="none" stroke="#dcdcdc" stroke-width="1.5" stroke-linejoin="round"/>
<path d="M224.0 396.0 L345.0 374.3 L379.0 369.0" fill="none" stroke="#dcdcdc" stroke-width="1.5" stroke-linejoin="round"/>
<path d="M280.2 219.0 L283.0 252.5" fill="none" stroke="#dcdcdc" stroke-width="1.5" stroke-linejoin="round"/>
<path d="M173.0 320.0 L185.0 334.8 L185.0 344.0 L178.4 350.8 L178.4 357.5 L183.8 366.8 L189.0 412.0 L190.0 425.0" fill="none" stroke="#dcdcdc" stroke-width="1.5" stroke-linejoin="round"/>
<path d="M185.0 334.8 L211.8 328.0" fill="none" stroke="#dcdcdc" stroke-width="1.5" stroke-linejoin="round"/>
<path d="M178.4 350.8 L213.0 342.8" fill="none" stroke="#dcdcdc" stroke-width="1.5" stroke-linejoin="round"/>
<path d="M183.8 366.8 L215.9 362.8" fill="none" stroke="#dcdcdc" stroke-width="1.5" stroke-linejoin="round"/>
<path d="M183.8 366.8 L227.9 393.6" fill="none" stroke="#dcdcdc" stroke-width="1.5" stroke-linejoin="round"/>
<path d="M203.8 377.5 L209.0 412.0 L210.0 425.0" fill="none" stroke="#dcdcdc" stroke-width="1.5" stroke-linejoin="round"/>
<path d="M410.7 205.7 L462.0 196.0" fill="none" stroke="#dcdcdc" stroke-width="1.5" stroke-linejoin="round"/>
<path d="M478.5 249.2 L525.0 242.0 L648.5 219.8" fill="none" stroke="#dcdcdc" stroke-width="1.5" stroke-linejoin="round"/>
<path d="M483.6 279.9 L525.0 272.2 L617.8 254.3" fill="none" stroke="#dcdcdc" stroke-width="1.5" stroke-linejoin="round"/>
<path d="M644.6 196.7 L663.8 277.3" fill="none" stroke="#dcdcdc" stroke-width="1.5" stroke-linejoin="round"/>
<path d="M658.7 194.0 L668.0 240.0 L676.0 276.0" fill="none" stroke="#dcdcdc" stroke-width="1.5" stroke-linejoin="round"/>
<path d="M674.0 190.3 L680.0 205.0 L688.0 221.0 L700.0 240.0" fill="none" stroke="#dcdcdc" stroke-width="1.5" stroke-linejoin="round"/>
<path d="M617.0 294.5 L638.3 412.0 L641.0 425.0" fill="none" stroke="#dcdcdc" stroke-width="1.5" stroke-linejoin="round"/>
<path d="M641.6 281.5 L671.0 412.0 L674.0 425.0" fill="none" stroke="#dcdcdc" stroke-width="1.5" stroke-linejoin="round"/>
<path d="M662.8 278.3 L687.0 382.5 L695.0 412.0" fill="none" stroke="#dcdcdc" stroke-width="1.5" stroke-linejoin="round"/>
<path d="M545.5 353.0 L687.0 330.4 L700.0 328.0" fill="none" stroke="#dcdcdc" stroke-width="1.5" stroke-linejoin="round"/>
<path d="M540.6 337.0 L625.0 320.6 L690.0 309.0" fill="none" stroke="#dcdcdc" stroke-width="1.5" stroke-linejoin="round"/>
<path d="M537.3 317.0 L599.0 307.6 L690.0 294.0" fill="none" stroke="#dcdcdc" stroke-width="1.5" stroke-linejoin="round"/>
<path d="M547.0 364.6 L605.7 351.5 L690.0 337.0" fill="none" stroke="#dcdcdc" stroke-width="1.5" stroke-linejoin="round"/>
<path d="M551.0 383.0 L612.0 371.0 L690.0 357.0" fill="none" stroke="#dcdcdc" stroke-width="1.5" stroke-linejoin="round"/>
<path d="M495.0 364.6 L547.0 354.8" fill="none" stroke="#dcdcdc" stroke-width="1.5" stroke-linejoin="round"/>
<path d="M519.4 363.0 L527.6 412.0 L530.0 425.0" fill="none" stroke="#dcdcdc" stroke-width="1.5" stroke-linejoin="round"/>
<path d="M509.7 364.0 L517.0 412.0" fill="none" stroke="#dcdcdc" stroke-width="1.5" stroke-linejoin="round"/>
<path d="M539.0 356.4 L547.0 412.0 L549.0 425.0" fill="none" stroke="#dcdcdc" stroke-width="1.5" stroke-linejoin="round"/>
<path d="M458.6 315.7 L465.5 412.0 L466.0 425.0" fill="none" stroke="#dcdcdc" stroke-width="1.5" stroke-linejoin="round"/>
<path d="M440.5 393.6 L507.0 389.6" fill="none" stroke="#dcdcdc" stroke-width="1.5" stroke-linejoin="round"/>
<path d="M447.0 383.0 L448.5 412.0 L449.0 425.0" fill="none" stroke="#dcdcdc" stroke-width="1.5" stroke-linejoin="round"/>
<path d="M461.8 345.5 L472.5 341.4" fill="none" stroke="#dcdcdc" stroke-width="1.5" stroke-linejoin="round"/>
<path d="M472.5 341.4 L475.0 412.0 L475.5 425.0" fill="none" stroke="#dcdcdc" stroke-width="1.5" stroke-linejoin="round"/>
<path d="M490.0 369.5 L490.7 412.0 L491.0 425.0" fill="none" stroke="#dcdcdc" stroke-width="1.5" stroke-linejoin="round"/>
<path d="M498.0 388.0 L499.5 412.0 L500.0 425.0" fill="none" stroke="#dcdcdc" stroke-width="1.5" stroke-linejoin="round"/>
<path d="M504.0 126.0 L515.5 185.0" fill="none" stroke="#dcdcdc" stroke-width="1.5" stroke-linejoin="round"/>
<path d="M600.0 80.0 L612.0 92.0 L640.0 86.0" fill="none" stroke="#dcdcdc" stroke-width="1.5" stroke-linejoin="round"/>
<path d="M560.0 70.0 L565.0 82.0 L588.0 92.0" fill="none" stroke="#dcdcdc" stroke-width="1.5" stroke-linejoin="round"/>
<path d="M593.5 106.6 L700 82.6" fill="none" stroke="#eeeeee" stroke-width="2.4" stroke-dasharray="3 2"/>
<circle cx="593.5" cy="106.2" r="3.2" fill="#fbfbfb" stroke="#d0d0d0" stroke-width="2"/>
<circle cx="584" cy="401.2" r="6" fill="#fbfbfb" stroke="#d0d0d0" stroke-width="1.8"/>
<path d="M140 96.5 L147 96 Q170 95.3 196 91.5 T248 79.5 L262 75" fill="none" stroke="#333" stroke-width="2.2"/>
<path d="M140 96.5 L147 96 Q170 95.3 196 91.5 T248 79.5 L262 75" fill="none" stroke="#fff" stroke-width="1.1" stroke-dasharray="2.9 2.9"/>
<g font-family="'DejaVu Sans','Liberation Sans',sans-serif" font-size="7.3" fill="#8e8e8e" text-anchor="middle" stroke="#fbfbfb" stroke-width="1.6" paint-order="stroke" stroke-linejoin="round">
<text x="218" y="162" dy="2.5" transform="rotate(34.8 218 162)">Avenue du Yatenga</text>
<text x="299" y="112.5" dy="2.5" transform="rotate(71.8 299 112.5)">e Capitaine Kouanda</text>
<text x="361" y="140" dy="2.5" transform="rotate(-11 361 140)">Rue 3.38</text>
<text x="308.5" y="180" dy="2.5" transform="rotate(80 308.5 180)">Rue 2.26</text>
<text x="340" y="197" dy="2.5" transform="rotate(-13.5 340 197)">Avenue Nelson Mandela</text>
<text x="266" y="232.5" dy="2.5" transform="rotate(-40.7 266 232.5)">Avenue Kadiogo</text>
<text x="294.6" y="244.7" dy="2.5" transform="rotate(-11.5 294.6 244.7)">Avenue de la B.C.F.A.O.</text>
<text x="423" y="150" dy="2.5" transform="rotate(75.6 423 150)">Rue Joseph Badoua</text>
<text x="450" y="122" dy="2.5" transform="rotate(74.4 450 122)">Avenue de Lyon</text>
<text x="500.5" y="132.3" dy="2.5" transform="rotate(-13 500.5 132.3)">Avenue de la Nation</text>
<text x="480.5" y="146.6" dy="2.5" transform="rotate(-12.5 480.5 146.6)">Rue 3.42</text>
<text x="476.5" y="172.8" dy="2.5" transform="rotate(-10.2 476.5 172.8)">Rue de l'Hôtel de Ville</text>
<text x="531" y="90" dy="2.5" transform="rotate(77 531 90)">Rue du Temple</text>
<text x="568" y="132" dy="2.5" transform="rotate(-35.8 568 132)">Rue de la Justice</text>
<text x="610.5" y="190" dy="2.5" transform="rotate(78.5 610.5 190)">Avenue Kwamé N'Krumah</text>
<text x="664" y="167" dy="2.5" transform="rotate(-14.4 664 167)">Avenue A. Néto</text>
<text x="690" y="94" dy="2.5" transform="rotate(12 690 94)">Avenue</text>
<text x="619" y="81" dy="2.5" transform="rotate(-40 619 81)">Av</text>
<text x="577" y="184" dy="2.5" transform="rotate(-8.7 577 184)">Rue 4.70</text>
<text x="446" y="194.5" dy="2.5" transform="rotate(-8 446 194.5)">Rue 2.06</text>
<text x="543.6" y="208" dy="2.5" transform="rotate(78.7 543.6 208)">Avenue Yennenga</text>
<text x="580" y="234" dy="2.5" transform="rotate(76 580 234)">Avenue de Loudun</text>
<text x="655.5" y="233" dy="2.5" transform="rotate(74.7 655.5 233)">Avenue de l'UEMOA</text>
<text x="650" y="276.5" dy="2.5" transform="rotate(-8.5 650 276.5)">Avenue Houari Boumédiène</text>
<text x="395.5" y="254.5" dy="2.5" transform="rotate(80 395.5 254.5)">Avenue Mgr Thevenoud</text>
<text x="446" y="270" dy="2.5" transform="rotate(75.5 446 270)">Rue Joseph Badoua</text>
<text x="477" y="258" dy="2.5" transform="rotate(79 477 258)">Rue du Grand Marché</text>
<text x="290" y="331" dy="2.5" transform="rotate(-8.5 290 331)">Avenue de la Cathedrale</text>
<text x="275.3" y="323.9" dy="2.5" transform="rotate(-10.5 275.3 323.9)">Rue Rimvuuse</text>
<text x="239.5" y="316.5" dy="2.5" transform="rotate(78 239.5 316.5)">rue 2.13</text>
<text x="271" y="303.5" dy="2.5" transform="rotate(75 271 303.5)">rue 2.17</text>
<text x="310.5" y="288.4" dy="2.5" transform="rotate(79 310.5 288.4)">Rue Floo-Toenga</text>
<text x="214" y="366" dy="2.5" transform="rotate(79 214 366)">Avenue Kanazoe</text>
<text x="167" y="306.5" dy="2.5" transform="rotate(-34 167 306.5)">Avenue Kadiogo</text>
<text x="175" y="316.5" dy="2.5" transform="rotate(-34 175 316.5)">Avenue Kadiogo</text>
<text x="290" y="389" dy="2.5" transform="rotate(-10.7 290 389)">Avenue Me. Pacere Frederic</text>
<text x="344" y="358" dy="2.5" transform="rotate(81.9 344 358)">Avenue Mario Naba Oubri</text>
<text x="375.5" y="351.5" dy="2.5" transform="rotate(80 375.5 351.5)">Avenue Bassawarga</text>
<text x="478" y="306.8" dy="2.5" transform="rotate(-11 478 306.8)">Avenue de la Cathedrale</text>
<text x="463.5" y="367" dy="2.5" transform="rotate(86 463.5 367)">Rue Ouadraogo Julien</text>
<text x="497.6" y="380" dy="2.5" transform="rotate(60 497.6 380)">Rue Joseph Badoua</text>
<text x="538.5" y="322.6" dy="2.5" transform="rotate(76 538.5 322.6)">Avenue de la Grande Mosquée</text>
<text x="566" y="346.6" dy="2.5" transform="rotate(77.4 566 346.6)">Avenue Yennenga</text>
<text x="603" y="338.5" dy="2.5" transform="rotate(-11.8 603 338.5)">rue 5.10</text>
<text x="604" y="372.7" dy="2.5" transform="rotate(73.6 604 372.7)">Avenue Loudun</text>
<text x="628.2" y="365" dy="2.5" transform="rotate(76 628.2 365)">Rue Zangouin</text>
<text x="641" y="352" dy="2.5" transform="rotate(78.5 641 352)">Avenue Kwamé N'Krumah</text>
<text x="667" y="392" dy="2.5" transform="rotate(71 667 392)">Rue Badnoogo</text>
<text x="527" y="402" dy="2.5" transform="rotate(79 527 402)">Rue Tensoba</text>
<text x="546" y="404" dy="2.5" transform="rotate(79 546 404)">Rue Sourgou</text>
</g>
<rect x="164.5" y="96.7" width="3.2" height="83.5" fill="#d6d4d1" stroke="#c2bfbb" stroke-width="0.5"/>
<rect x="161.6" y="103.6" width="8.4" height="7.4" rx="1.4" fill="#b9d4f5" stroke="#7fa8e0" stroke-width="0.8"/>
<rect x="163.6" y="106.6" width="4.4" height="1.3" fill="#f2f7ff"/>
<g font-family="'Liberation Mono',monospace" font-size="7.2" fill="#000" stroke="#000" stroke-width="0.15">
<g transform="translate(301.5 196.7)"><rect x="0.2" y="0.2" width="8.8" height="8.8" rx="1.2" fill="#fab030"/><path d="M2.8 1.6 V7.6 M6.3 1.6 V7.6" stroke="#fff6dc" stroke-width="1.2"/><path d="M1.8 1.6 V3.6 H3.8 V1.6" stroke="#fff6dc" stroke-width="0.6" fill="none"/></g>
<text x="265.2" y="195.8" textLength="41.5" lengthAdjust="spacingAndGlyphs">Ivoire resto</text>
<g transform="translate(200.8 251.2)"><rect x="0.2" y="0.2" width="8.8" height="8.8" rx="1.2" fill="#fab030"/><path d="M2.8 1.6 V7.6 M6.3 1.6 V7.6" stroke="#fff6dc" stroke-width="1.2"/><path d="M1.8 1.6 V3.6 H3.8 V1.6" stroke="#fff6dc" stroke-width="0.6" fill="none"/></g>
<text x="180.8" y="250.3" textLength="24.2" lengthAdjust="spacingAndGlyphs">Babadia</text>
<g transform="translate(426.5 180.0)"><rect x="0.2" y="0.2" width="8.8" height="8.8" rx="1.2" fill="#fab030"/><path d="M2.8 1.6 V7.6 M6.3 1.6 V7.6" stroke="#fff6dc" stroke-width="1.2"/><path d="M1.8 1.6 V3.6 H3.8 V1.6" stroke="#fff6dc" stroke-width="0.6" fill="none"/></g>
<text x="410.7" y="179.4" textLength="20.8" lengthAdjust="spacingAndGlyphs">Dankan</text>
<g transform="translate(504.0 193.2)"><rect x="0.2" y="0.2" width="8.8" height="8.8" rx="1.2" fill="#fab030"/><path d="M2.8 1.6 V7.6 M6.3 1.6 V7.6" stroke="#fff6dc" stroke-width="1.2"/><path d="M1.8 1.6 V3.6 H3.8 V1.6" stroke="#fff6dc" stroke-width="0.6" fill="none"/></g>
<text x="453.6" y="192.7" textLength="55.4" lengthAdjust="spacingAndGlyphs">Resto senegalais</text>
<g transform="translate(451.0 202.5)"><rect x="0.2" y="0.2" width="8.8" height="8.8" rx="1.5" fill="#55d458"/><path d="M1.8 6.9 V3.2 H7.3 V6.9 M1.8 5.3 H7.3" stroke="#e9ffe9" stroke-width="1" fill="none"/></g>
<text x="426" y="201.7" textLength="31.1" lengthAdjust="spacingAndGlyphs">(2) Hotel</text>
<g transform="translate(405.6 224.7)"><rect x="0.2" y="0.2" width="8.8" height="8.8" rx="1.5" fill="#55d458"/><path d="M1.8 6.9 V3.2 H7.3 V6.9 M1.8 5.3 H7.3" stroke="#e9ffe9" stroke-width="1" fill="none"/></g>
<text x="391" y="223.9" textLength="20.8" lengthAdjust="spacingAndGlyphs">Janiso</text>
</g>
<path d="M683 354.2 H690 V365 H683 A5.4 5.4 0 0 1 683 354.2 Z" fill="#10128a"/>
<path d="M680.4 359.6 H686.4 M683.4 356.6 V362.6" stroke="#fff" stroke-width="1.5"/>
<g font-family="'Liberation Sans',sans-serif" font-size="6.1" fill="#111"><text x="592" y="383.6">Data CC-By-SA by <tspan fill="#1a1ae0" text-decoration="underline">OpenStreetMap</tspan></text>
<text x="599.2" y="409.8" font-size="6.2">-168778.95114, 1387260.41431</text></g>
</svg>
<!--MAPEND-->
<div class="a" id="mapbar" style="left:147px;top:411px;width:540.8px;height:3px;background:#d3e2f8;border-top:1px solid #8fb3e6;box-sizing:border-box;"></div>
<!-- RIGHT PANEL -->
<div class="a" style="left:692px;top:76px;width:104px;height:339px;box-sizing:border-box;border:1px solid #a3c0e8;background:#fff;"></div>
<div class="ph" style="left:692px;top:76px;width:104px;height:16px;"></div>
<div class="pt" style="left:695.5px;top:81.8px;">Aide</div>
<div class="tool" style="left:785.5px;top:80.5px;width:8px;height:8px;"></div>
<svg class="a" style="left:786.2px;top:81.2px" width="6.6" height="6.6" viewBox="0 0 6 6"><path d="M0.8 0.9 L2.8 3 L0.8 5.1 M3.2 0.9 L5.2 3 L3.2 5.1" fill="none" stroke="#2f5fa8" stroke-width="1"/></svg>
<div class="a" style="left:695px;top:94px;width:98px;height:317px;box-sizing:border-box;border:1px solid #a3c0e8;background:#fff;"></div>
<div class="ph" style="left:695px;top:94px;width:98px;height:15.5px;"></div>
<div class="pt" style="left:698.6px;top:99.8px;">Legende</div>
<div class="tool" style="left:782px;top:98px;width:8px;height:8px;"></div>
<svg class="a" style="left:783.5px;top:100.2px" width="5" height="4" viewBox="0 0 5 4"><path d="M0.3 3.4 L2.5 0.6 L4.7 3.4 Z" fill="#2f5ea8"/></svg>
<div id="legend">
<div class="t" style="left:697.5px;top:112.9px;font-size:7px;color:#111;">Autres</div>
<svg class="a" style="left:700.8px;top:125.2px" width="9" height="9" viewBox="0 0 9 9"><rect x="0.3" y="0.3" width="8.4" height="8.4" rx="2" fill="#2aa3dc"/><rect x="2.4" y="1.6" width="4.4" height="5.6" rx="1" fill="#e8f6fd"/><path d="M4.4 2.6 V6.2 M3.4 3.4 L5.6 5.4" stroke="#1c6fa5" stroke-width="0.8"/></svg>
<div class="t" style="left:714px;top:128.2px;font-family:'Liberation Mono',monospace;font-weight:bold;font-size:6.6px;color:#0b0b5a;">autres</div>
<div class="t" style="left:697.5px;top:141.2px;font-size:7px;color:#111;">Pharmacie</div>
<svg class="a" style="left:700.8px;top:152.6px" width="8.2" height="8.6" viewBox="0 0 9 9"><rect x="0.5" y="0.5" width="8" height="8" fill="#fff" stroke="#444" stroke-width="1"/><path d="M2.2 3 H4 M5 3 H6.8 M2.2 5.8 H4 M5 5.8 H6.8" stroke="#333" stroke-width="1.1"/></svg>
<div class="t" style="left:714px;top:156.5px;font-family:'Liberation Mono',monospace;font-weight:bold;font-size:6.6px;color:#0b0b5a;">pharmacie</div>
<div class="t" style="left:697.5px;top:169.5px;font-size:7px;color:#111;">Hotel</div>
<svg class="a" style="left:700.8px;top:181.8px" width="9" height="9" viewBox="0 0 9 9"><rect x="0.2" y="0.2" width="8.6" height="8.6" rx="1.5" fill="#55d458"/><path d="M1.8 6.8 V3.2 H7.2 V6.8 M1.8 5.2 H7.2" stroke="#e9ffe9" stroke-width="1" fill="none"/></svg>
<div class="t" style="left:714px;top:184.8px;font-family:'Liberation Mono',monospace;font-weight:bold;font-size:6.6px;color:#0b0b5a;">hotel</div>
<div class="t" style="left:697.5px;top:197.8px;font-size:7px;color:#111;">Restaurant</div>
<svg class="a" style="left:700.8px;top:210.1px" width="9" height="9" viewBox="0 0 9 9"><rect x="0.2" y="0.2" width="8.6" height="8.6" rx="1.2" fill="#fab030"/><path d="M2.6 1.5 V7.5 M6.2 1.5 V7.5" stroke="#fff6dc" stroke-width="1.2"/><path d="M1.6 1.5 V3.4 H3.6 V1.5" stroke="#fff6dc" stroke-width="0.6" fill="none"/></svg>
<div class="t" style="left:714px;top:213.1px;font-family:'Liberation Mono',monospace;font-weight:bold;font-size:6.6px;color:#0b0b5a;">restaurant</div>
</div><!--/legend-->

<!-- status bar -->
<div class="a" style="left:5px;top:415px;width:791px;height:11px;background:#dceafb;"></div>
<div class="t" style="left:9.6px;top:416.2px;font-size:8.6px;font-weight:bold;color:#333;">×</div>
<!-- badges -->
<div class="a" style="left:736.5px;top:416.5px;width:8px;height:8.5px;background:linear-gradient(#f29a3a 0,#ee8a2a 58%,#b9bcc0 60%,#c9ccd0 100%);border-radius:1px;"></div>
<div class="a" style="left:739px;top:418px;width:3px;height:2.4px;border:0.8px solid #ffe9c8;border-left:none;border-bottom:none;border-radius:0 2px 0 0;"></div>
<div class="a" style="left:744px;top:416px;width:12.4px;height:7px;background:#d2141e;"></div>
<div class="t" style="left:744.8px;top:416.6px;font-size:6.4px;font-weight:bold;color:#fff;">721</div>
<div class="a" style="left:768px;top:417px;width:7.6px;height:7.6px;background:#d9121f;border-radius:1px;"></div>
<svg class="a" style="left:768.6px;top:417.8px" width="7" height="6.4" viewBox="0 0 7 6.4"><path d="M1 0.8 L4.6 0.6 L6 2.4 L5.2 3.6 L4.6 5.8 L3.4 5.8 L3 3.8 L1.2 3.2 Z" fill="#fff"/></svg>
<div class="a" style="left:775.4px;top:416px;width:11.8px;height:7px;background:#d2141e;"></div>
<div class="t" style="left:776px;top:416.6px;font-size:6.4px;font-weight:bold;color:#fff;">292</div>
</body></html>
